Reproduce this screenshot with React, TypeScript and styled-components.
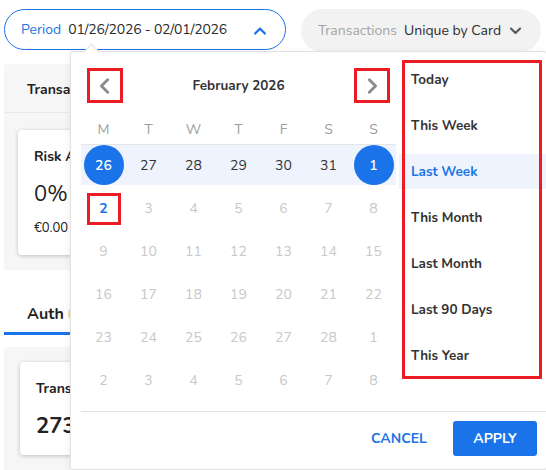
import React from "react";
import styled, { createGlobalStyle } from "styled-components";

const GlobalStyle = createGlobalStyle`
  html, body {
    margin: 0;
    padding: 0;
    background: #fff;
  }
  body {
    font-family: "Nunito", "Open Sans", "Noto Sans", sans-serif;
    color: #333;
  }
  * {
    box-sizing: border-box;
  }
`;

const BLUE = "#1a73e8";
const MARK = "#ec1c24";

const Page = styled.div`
  position: relative;
  width: 546px;
  height: 470px;
  overflow: hidden;
  background: #fff;
`;

const TopBar = styled.div`
  display: flex;
  align-items: flex-start;
  gap: 15px;
  padding: 9px 0 0 4px;
`;

const Pill = styled.button<{ $filled?: boolean }>`
  display: flex;
  align-items: center;
  width: ${(p) => (p.$filled ? "240px" : "282px")};
  height: ${(p) => (p.$filled ? "43px" : "41px")};
  padding: 0 18px 0 16px;
  border: 1px solid ${(p) => (p.$filled ? "transparent" : BLUE)};
  border-radius: 22px;
  background: ${(p) => (p.$filled ? "#f2f2f2" : "#fff")};
  font: inherit;
  font-size: 14px;
  cursor: pointer;
`;

const PillLabel = styled.span<{ $muted?: boolean }>`
  color: ${(p) => (p.$muted ? "#a5a5a5" : BLUE)};
  margin-right: 7px;
`;

const PillValue = styled.span<{ $tight?: boolean }>`
  flex: 1;
  text-align: left;
  color: #2b2b2b;
  letter-spacing: ${(p) => (p.$tight ? "-0.2px" : "0")};
`;

// page behind the popover
const Content = styled.div`
  padding: 12px 0 0 4px;
`;

const Panel = styled.section`
  background: #f6f6f6;
  border-radius: 4px;
`;

const PanelHeader = styled.div`
  display: flex;
  align-items: center;
  height: 49px;
  padding: 3px 0 0 23px;
  border-bottom: 1px solid #e9e9e9;
  font-size: 14px;
  font-weight: 700;
  color: #222;
`;

const PanelBody = styled.div<{ $pad: string }>`
  display: flex;
  padding: ${(p) => p.$pad};
`;

const MetricCard = styled.div<{ $h: number }>`
  width: 220px;
  height: ${(p) => p.$h}px;
  padding: 17px 16px 0;
  background: #fff;
  border-radius: 4px;
  box-shadow: 0 1px 4px rgba(0, 0, 0, 0.22);
`;

const CardTitle = styled.div`
  font-size: 14px;
  font-weight: 700;
  color: #222;
  line-height: 20px;
`;

const CardValue = styled.div<{ $bold?: boolean }>`
  margin-top: ${(p) => (p.$bold ? "12px" : "12px")};
  font-size: 22px;
  font-weight: ${(p) => (p.$bold ? 700 : 400)};
  line-height: 30px;
  color: #222;
`;

const CardSub = styled.div`
  margin-top: 10px;
  font-size: 13px;
  color: #222;
`;

const Tabs = styled.div`
  display: flex;
  margin-top: 20px;
  margin-bottom: 12px;
`;

const Tab = styled.div`
  display: flex;
  align-items: center;
  gap: 4px;
  width: 120px;
  height: 45px;
  padding: 6px 0 0 23px;
  border-bottom: 3px solid ${BLUE};
  font-size: 16px;
  font-weight: 700;
  color: #222;
`;

const Badge = styled.span`
  display: inline-block;
  width: 22px;
  height: 18px;
  border-radius: 9px;
  background: #fbd68a;
`;

// date range popover
const Popover = styled.div`
  position: absolute;
  left: 70px;
  top: 51px;
  width: 477px;
  display: flex;
  flex-direction: column;
  background: #fff;
  border: 1px solid #e2e2e2;
  border-radius: 3px;
  box-shadow: 0 2px 8px rgba(0, 0, 0, 0.08);
`;

const Notch = styled.span`
  position: absolute;
  left: 15px;
  top: -6px;
  width: 11px;
  height: 11px;
  background: #fff;
  border-top: 1px solid #e2e2e2;
  border-left: 1px solid #e2e2e2;
  transform: rotate(45deg);
`;

const Body = styled.div`
  display: flex;
  align-items: flex-start;
`;

const Calendar = styled.div`
  width: 328px;
  padding: 0 3px 0 10px;
`;

const CalHeader = styled.div`
  display: flex;
  align-items: center;
  justify-content: space-between;
  height: 35px;
  margin-top: 16px;
  padding: 0 6px;
`;

const NavButton = styled.button`
  display: flex;
  align-items: center;
  justify-content: center;
  width: 36px;
  height: 35px;
  padding: 0;
  border: 3px solid ${MARK};
  background: #fff;
  cursor: pointer;
`;

const MonthTitle = styled.div`
  font-size: 13.5px;
  font-weight: 700;
  color: #333;
`;

const WeekdayRow = styled.div`
  display: grid;
  grid-template-columns: repeat(7, 45px);
  align-items: center;
  height: 31px;
  margin-top: 11px;
  border-bottom: 1px solid #e6e6e6;
  font-size: 14px;
  color: #9c9c9c;
  text-align: center;
`;

const WeekRow = styled.div<{ $band?: boolean }>`
  display: grid;
  grid-template-columns: repeat(7, 45px);
  height: 40px;
  margin-bottom: 3px;
  background: ${(p) => (p.$band ? "#eef3fd" : "transparent")};
  &:last-child {
    margin-bottom: 0;
  }
`;

type DayKind = "edge" | "inRange" | "today" | "muted";

const Day = styled.div<{ $kind: DayKind }>`
  display: flex;
  align-items: center;
  justify-content: center;
  font-size: 14px;
  color: ${(p) =>
    p.$kind === "inRange"
      ? "#333"
      : p.$kind === "today"
      ? BLUE
      : p.$kind === "edge"
      ? "#fff"
      : "#c8c8c8"};
  font-weight: ${(p) => (p.$kind === "today" ? 700 : 400)};
`;

const Circle = styled.span`
  display: flex;
  align-items: center;
  justify-content: center;
  width: 40px;
  height: 40px;
  border-radius: 50%;
  background: ${BLUE};
  color: #fff;
  font-weight: 600;
`;

const MarkBox = styled.span`
  display: flex;
  align-items: center;
  justify-content: center;
  width: 34px;
  height: 32px;
  margin-top: 1px;
  border: 3px solid ${MARK};
`;

const Presets = styled.div`
  position: relative;
  flex: 1;
  display: flex;
  flex-direction: column;
  gap: 11px;
  padding: 10px 0 6px;
  &::after {
    content: "";
    position: absolute;
    top: 8px;
    left: 3px;
    right: 4px;
    bottom: 0;
    border: 3px solid ${MARK};
    pointer-events: none;
  }
`;

const Preset = styled.div<{ $active?: boolean }>`
  display: flex;
  align-items: center;
  height: 35px;
  padding-left: 12px;
  font-size: 13.5px;
  font-weight: 700;
  color: ${(p) => (p.$active ? BLUE : "#333")};
  background: ${(p) => (p.$active ? "#eef3fd" : "transparent")};
`;

const Footer = styled.div`
  display: flex;
  align-items: center;
  justify-content: flex-end;
  gap: 26px;
  height: 58px;
  margin: 11px 0 0 10px;
  padding: 0 9px 4px 0;
  border-top: 1px solid #e3e3e3;
`;

const TextButton = styled.button`
  padding: 0;
  border: none;
  background: none;
  font: inherit;
  font-size: 14px;
  font-weight: 700;
  color: ${BLUE};
  cursor: pointer;
`;

const ApplyButton = styled.button`
  width: 84px;
  height: 35px;
  border: none;
  border-radius: 3px;
  background: ${BLUE};
  font: inherit;
  font-size: 14px;
  font-weight: 700;
  color: #fff;
  cursor: pointer;
`;

const Chevron = ({ dir, color, size = 12 }: { dir: "up" | "down" | "left" | "right"; color: string; size?: number }) => {
  const pts = {
    up: "3,15 10,8 17,15",
    down: "3,7 10,14 17,7",
    left: "13,3 6,10 13,17",
    right: "7,3 14,10 7,17",
  }[dir];
  return (
    <svg width={size} height={size} viewBox="0 0 20 20">
      <polyline points={pts} fill="none" stroke={color} strokeWidth={3.2} strokeLinecap="round" strokeLinejoin="round" />
    </svg>
  );
};

const weekdays = ["M", "T", "W", "T", "F", "S", "S"];
const weeks: number[][] = [
  [26, 27, 28, 29, 30, 31, 1],
  [2, 3, 4, 5, 6, 7, 8],
  [9, 10, 11, 12, 13, 14, 15],
  [16, 17, 18, 19, 20, 21, 22],
  [23, 24, 25, 26, 27, 28, 1],
  [2, 3, 4, 5, 6, 7, 8],
];
const presets = ["Today", "This Week", "Last Week", "This Month", "Last Month", "Last 90 Days", "This Year"];

function kindOf(w: number, d: number): DayKind {
  if (w === 0) return d === 0 || d === 6 ? "edge" : "inRange";
  if (w === 1 && d === 0) return "today";
  return "muted";
}

export default function App() {
  return (
    <Page>
      <GlobalStyle />
      <TopBar>
        <Pill>
          <PillLabel>Period</PillLabel>
          <PillValue $tight>01/26/2026 - 02/01/2026</PillValue>
          <Chevron dir="up" color={BLUE} size={14} />
        </Pill>
        <Pill $filled>
          <PillLabel $muted>Transactions</PillLabel>
          <PillValue>Unique by Card</PillValue>
          <Chevron dir="down" color="#555" size={13} />
        </Pill>
      </TopBar>

      <Content>
        <Panel>
          <PanelHeader>Transactions</PanelHeader>
          <PanelBody $pad="17px 0 15px 14px">
            <MetricCard $h={125}>
              <CardTitle>Risk Assessment</CardTitle>
              <CardValue>0%</CardValue>
              <CardSub>€0.00</CardSub>
            </MetricCard>
          </PanelBody>
        </Panel>
        <Tabs>
          <Tab>
            Auth <Badge />
          </Tab>
        </Tabs>
        <Panel>
          <PanelBody $pad="15px 0 20px 16px">
            <MetricCard $h={93}>
              <CardTitle>Transactions</CardTitle>
              <CardValue $bold>273</CardValue>
            </MetricCard>
          </PanelBody>
        </Panel>
      </Content>

      <Popover>
        <Notch />
        <Body>
          <Calendar>
            <CalHeader>
              <NavButton aria-label="Previous month">
                <Chevron dir="left" color="#8c8c8c" size={18} />
              </NavButton>
              <MonthTitle>February 2026</MonthTitle>
              <NavButton aria-label="Next month">
                <Chevron dir="right" color="#8c8c8c" size={18} />
              </NavButton>
            </CalHeader>
            <WeekdayRow>
              {weekdays.map((w, i) => (
                <span key={i}>{w}</span>
              ))}
            </WeekdayRow>
            {weeks.map((week, wi) => (
              <WeekRow key={wi} $band={wi === 0}>
                {week.map((n, di) => {
                  const kind = kindOf(wi, di);
                  return (
                    <Day key={di} $kind={kind}>
                      {kind === "edge" ? <Circle>{n}</Circle> : kind === "today" ? <MarkBox>{n}</MarkBox> : n}
                    </Day>
                  );
                })}
              </WeekRow>
            ))}
          </Calendar>
          <Presets>
            {presets.map((p) => (
              <Preset key={p} $active={p === "Last Week"}>
                {p}
              </Preset>
            ))}
          </Presets>
        </Body>
        <Footer>
          <TextButton>CANCEL</TextButton>
          <ApplyButton>APPLY</ApplyButton>
        </Footer>
      </Popover>
    </Page>
  );
}
